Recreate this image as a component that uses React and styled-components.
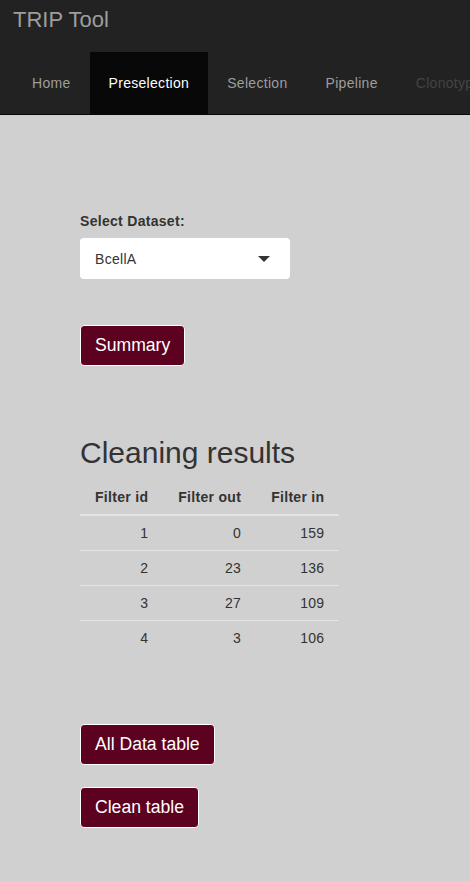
import React from 'react';
import styled, { createGlobalStyle } from 'styled-components';

const GlobalStyle = createGlobalStyle`
    html, body {
        margin: 0;
        padding: 0;
        background: #d0d0d0;
        font-family: "Liberation Sans", Arial, sans-serif;
        font-size: 14px;
        letter-spacing: 0.3px;
        color: #333;
    }
`;

const tabs = [
    { label: 'Home' },
    { label: 'Preselection', active: true },
    { label: 'Selection' },
    { label: 'Pipeline' },
    { label: 'Clonotypes', disabled: true },
];

const rows = [
    { id: 1, out: 0, in: 159 },
    { id: 2, out: 23, in: 136 },
    { id: 3, out: 27, in: 109 },
    { id: 4, out: 3, in: 106 },
];

export default function App() {
    return (
        <Page>
            <GlobalStyle />
            <Navbar>
                <Brand>TRIP Tool</Brand>
                <TabList>
                    {tabs.map(t => (
                        <Tab key={t.label} active={t.active} disabled={t.disabled}>{t.label}</Tab>
                    ))}
                </TabList>
            </Navbar>
            <Content>
                <Label>Select Dataset:</Label>
                <Select>
                    <span>BcellA</span>
                    <Caret />
                </Select>
                <SummaryRow>
                    <ActionButton>Summary</ActionButton>
                </SummaryRow>
                <Heading>Cleaning results</Heading>
                <Table>
                    <thead>
                        <tr>
                            <Th>Filter id</Th>
                            <Th>Filter out</Th>
                            <Th>Filter in</Th>
                        </tr>
                    </thead>
                    <tbody>
                        {rows.map(r => (
                            <tr key={r.id}>
                                <Td>{r.id}</Td>
                                <Td>{r.out}</Td>
                                <Td>{r.in}</Td>
                            </tr>
                        ))}
                    </tbody>
                </Table>
                <ButtonStack>
                    <ActionButton>All Data table</ActionButton>
                    <ActionButton>Clean table</ActionButton>
                </ButtonStack>
            </Content>
        </Page>
    );
}

const Page = styled.div`
    width: 470px;
    min-height: 881px;
    overflow: hidden;
`;

const Navbar = styled.div`
    background: #222;
    border-bottom: 1px solid #080808;
`;

const Brand = styled.div`
    height: 52px;
    padding: 7px 13px 0;
    box-sizing: border-box;
    font-size: 22px;
    line-height: 26px;
    letter-spacing: 0;
    color: #9d9d9d;
`;

const TabList = styled.div`
    display: flex;
    padding-left: 13px;
    white-space: nowrap;
`;

const Tab = styled.div`
    padding: 0 19px;
    height: 62px;
    line-height: 62px;
    font-size: 14px;
    color: ${p => (p.active ? '#fff' : p.disabled ? '#444' : '#9d9d9d')};
    background: ${p => (p.active ? '#080808' : 'transparent')};
`;

const Content = styled.div`
    padding: 96px 80px 40px;
`;

const Label = styled.div`
    font-weight: bold;
    line-height: 20px;
    margin-bottom: 7px;
`;

const Select = styled.div`
    width: 210px;
    height: 41px;
    box-sizing: border-box;
    background: #fff;
    border-radius: 4px;
    display: flex;
    align-items: center;
    justify-content: space-between;
    padding: 0 20px 0 15px;
    font-size: 14px;
    color: #333;
`;

const Caret = styled.span`
    width: 0;
    height: 0;
    border-left: 6px solid transparent;
    border-right: 6px solid transparent;
    border-top: 6px solid #333;
`;

const SummaryRow = styled.div`
    display: flex;
    margin-top: 46px;
`;

const ActionButton = styled.button`
    display: block;
    height: 41px;
    box-sizing: border-box;
    padding: 0 14px;
    background: #5c0120;
    color: #fff;
    border: 1px solid #fff;
    border-radius: 4px;
    font-family: "Liberation Sans", Arial, sans-serif;
    font-size: 17.6px;
`;

const Heading = styled.h2`
    font-size: 30px;
    font-weight: 500;
    line-height: 33px;
    letter-spacing: 0;
    margin: 70px 0 11px;
    color: #333;
`;

const Table = styled.table`
    border-collapse: collapse;
    font-size: 14px;
`;

const Th = styled.th`
    padding: 7px 15px;
    line-height: 20px;
    text-align: right;
    font-weight: bold;
    border-bottom: 2px solid #e4e4e4;
`;

const Td = styled.td`
    padding: 7px 15px;
    line-height: 20px;
    text-align: right;
    border-top: 1px solid #e4e4e4;
    tr:first-child > & {
        border-top: none;
    }
`;

const ButtonStack = styled.div`
    margin-top: 69px;
    display: flex;
    flex-direction: column;
    align-items: flex-start;
    gap: 22px;
`;
